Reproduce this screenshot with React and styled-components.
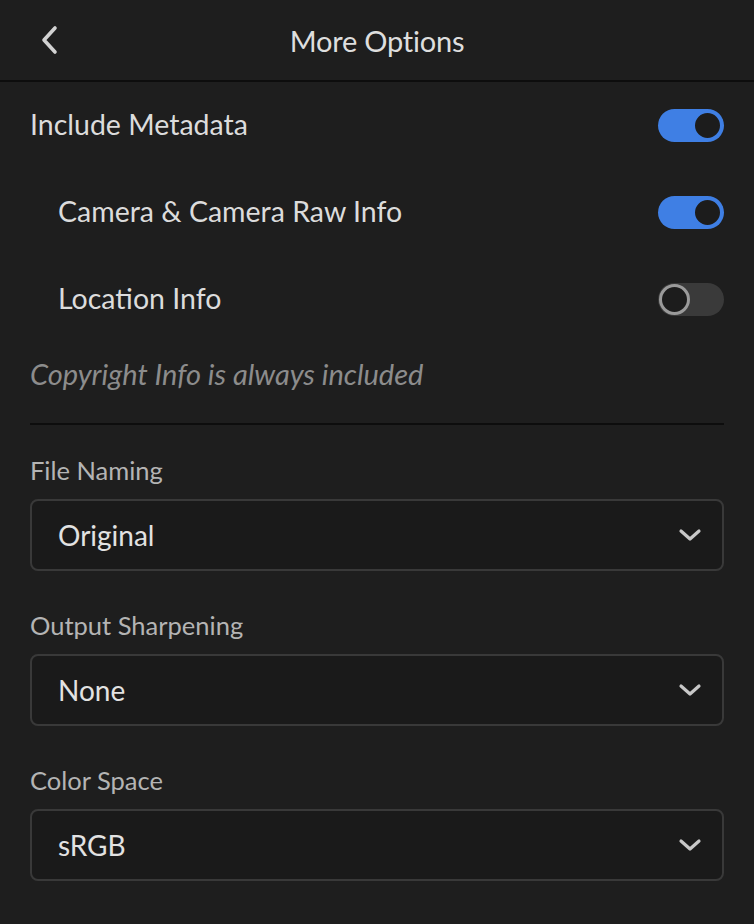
import React from 'react';
import styled, { createGlobalStyle } from 'styled-components';

const GlobalStyle = createGlobalStyle`
  html, body {
    margin: 0;
    padding: 0;
    background: #1e1e1e;
  }
  body {
    font-family: Lato, "Open Sans", sans-serif;
    color: #dcdcdc;
  }
`;

const options = [
  { label: 'Include Metadata', on: true, nested: false },
  { label: 'Camera & Camera Raw Info', on: true, nested: true },
  { label: 'Location Info', on: false, nested: true },
];

const selects = [
  { label: 'File Naming', value: 'Original' },
  { label: 'Output Sharpening', value: 'None' },
  { label: 'Color Space', value: 'sRGB' },
];

function Chevron() {
  return (
    <svg width="24" height="16" viewBox="0 0 24 16" fill="none">
      <path d="M3 4l9 8 9-8" stroke="#c8c8c8" strokeWidth="3.2" strokeLinecap="round" strokeLinejoin="round" />
    </svg>
  );
}

export default function App() {
  return (
    <Page>
      <GlobalStyle />
      <Header>
        <BackButton aria-label="Back">
          <svg width="22" height="32" viewBox="0 0 22 32" fill="none">
            <path d="M17 4L6 16l11 12" stroke="#d2d2d2" strokeWidth="3.6" strokeLinecap="round" strokeLinejoin="round" />
          </svg>
        </BackButton>
        <Title>More Options</Title>
      </Header>

      <Content>
        {options.map(opt => (
          <ToggleRow key={opt.label} nested={opt.nested}>
            <RowLabel>{opt.label}</RowLabel>
            <Toggle on={opt.on}>
              <Knob on={opt.on} />
            </Toggle>
          </ToggleRow>
        ))}

        <Note>Copyright Info is always included</Note>
        <Divider />

        <Sections>
          {selects.map(s => (
            <Section key={s.label}>
              <FieldLabel>{s.label}</FieldLabel>
              <Select>
                <SelectValue>{s.value}</SelectValue>
                <Chevron />
              </Select>
            </Section>
          ))}
        </Sections>
      </Content>
    </Page>
  );
}

const Page = styled.div`
  width: 754px;
  min-height: 924px;
  background: #1e1e1e;
`;

const Header = styled.header`
  position: relative;
  height: 80px;
  display: flex;
  align-items: center;
  justify-content: center;
  border-bottom: 2px solid #0d0d0d;
`;

const BackButton = styled.button`
  position: absolute;
  left: 38px;
  top: 24px;
  background: none;
  border: 0;
  padding: 0;
  display: flex;
`;

const Title = styled.h1`
  margin: 0;
  font-size: 29px;
  font-weight: 400;
  color: #dedede;
  letter-spacing: -0.2px;
`;

const Content = styled.main`
  padding: 0 30px 40px;
`;

const ToggleRow = styled.div`
  height: 87px;
  display: flex;
  align-items: center;
  justify-content: space-between;
  padding-left: ${p => (p.nested ? '28px' : '0')};
`;

const RowLabel = styled.span`
  font-size: 28.5px;
  color: #dcdcdc;
  margin-top: -4px;
`;

const Toggle = styled.div`
  width: 66px;
  height: 33px;
  box-sizing: border-box;
  border-radius: 17px;
  background: ${p => (p.on ? '#3f7fe4' : '#3a3a3a')};
  display: flex;
  align-items: center;
  justify-content: ${p => (p.on ? 'flex-end' : 'flex-start')};
  padding: 0 1px;
`;

const Knob = styled.div`
  width: 31px;
  height: 31px;
  box-sizing: border-box;
  border-radius: 50%;
  background: #1c1c1c;
  border: ${p => (p.on ? '3px solid #3f7fe4' : '3px solid #9a9a9a')};
`;

const Note = styled.p`
  margin: 11px 0 0;
  height: 40px;
  line-height: 40px;
  font-size: 29px;
  font-style: italic;
  color: #8c8c8c;
`;

const Divider = styled.hr`
  margin: 29px 0 0;
  border: 0;
  height: 2px;
  background: #0d0d0d;
`;

const Sections = styled.div`
  margin-top: 30px;
  display: flex;
  flex-direction: column;
  gap: 39px;
`;

const Section = styled.div`
  display: flex;
  flex-direction: column;
`;

const FieldLabel = styled.label`
  height: 30px;
  line-height: 30px;
  font-size: 25.5px;
  color: #b4b4b4;
  margin-bottom: 14px;
`;

const Select = styled.div`
  height: 72px;
  box-sizing: border-box;
  border: 2px solid #393939;
  border-radius: 8px;
  background: #1a1a1a;
  display: flex;
  align-items: center;
  justify-content: space-between;
  padding: 0 20px 0 26px;
`;

const SelectValue = styled.span`
  font-size: 28px;
  color: #e2e2e2;
`;
